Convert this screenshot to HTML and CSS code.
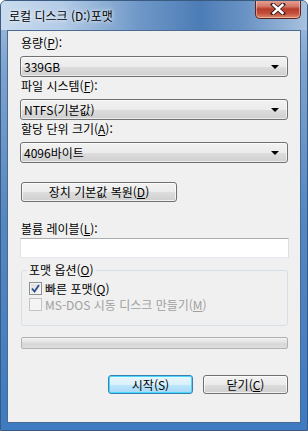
FILE: index.html
```html
<!DOCTYPE html>
<html lang="ko">
  <head>
    <meta charset="UTF-8" />
    <meta name="viewport" content="width=device-width, initial-scale=1.0" />
    <title>로컬 디스크 (D:)포맷</title>
    <link rel="stylesheet" href="styles.css">
  </head>
  <body>
    <div class="window">
      <div class="titlebar">
        <span class="title">로컬 디스크 (D:)포맷</span>
        <button class="close-btn" aria-label="닫기">
          <svg width="16" height="12" viewBox="0 0 16 12">
            <path d="M3 1.5 L13 10.5 M13 1.5 L3 10.5" stroke="#3a2020" stroke-width="4.2" stroke-linecap="square" />
            <path d="M3.5 2 L12.5 10 M12.5 2 L3.5 10" stroke="#ffffff" stroke-width="2.4" stroke-linecap="square" />
          </svg>
        </button>
      </div>
      <div class="client">
        <div class="label">용량(<u>P</u>):</div>
        <div class="combo"><span>339GB</span><span class="arrow"></span></div>

        <div class="label">파일 시스템(<u>F</u>):</div>
        <div class="combo"><span>NTFS(기본값)</span><span class="arrow"></span></div>

        <div class="label">할당 단위 크기(<u>A</u>):</div>
        <div class="combo"><span>4096바이트</span><span class="arrow"></span></div>

        <button class="btn restore">장치 기본값 복원(<u>D</u>)</button>

        <div class="label volume">볼륨 레이블(<u>L</u>):</div>
        <div class="textbox"></div>

        <fieldset class="group">
          <legend>포맷 옵션(<u>O</u>)</legend>
          <label class="check">
            <span class="box checked">
              <svg width="9" height="9" viewBox="0 0 9 9">
                <path d="M1 4.5 L3.5 7.5 L8 1" fill="none" stroke="#2c4c8c" stroke-width="1.8" />
              </svg>
            </span>
            <span>빠른 포맷(<u>Q</u>)</span>
          </label>
          <label class="check disabled">
            <span class="box"></span>
            <span>MS-DOS 시동 디스크 만들기(<u>M</u>)</span>
          </label>
        </fieldset>

        <div class="progress"></div>

        <div class="actions">
          <button class="btn default">시작(S)</button>
          <button class="btn">닫기(<u>C</u>)</button>
        </div>
      </div>
    </div>
  </body>
</html>
```

FILE: styles.css
```css
* {
  box-sizing: border-box;
}
body {
  margin: 0;
  background: #ffffff;
  font-family: "Noto Sans CJK KR", "Noto Sans", sans-serif;
  font-size: 12px;
  color: #000000;
}
.window {
  width: 308px;
  height: 431px;
  border-radius: 6px 6px 0 0;
  border: 1px solid #3a5a80;
  background: linear-gradient(to bottom, #a9c3e0 0%, #7ea4cf 15%, #5587c2 50%, #3e7bc2 100%);
  display: flex;
  flex-direction: column;
  overflow: hidden;
}
.titlebar {
  height: 29px;
  display: flex;
  align-items: flex-start;
  justify-content: space-between;
  background: linear-gradient(to right, #c9dbee 0%, #b3cbe6 20%, #6f98c8 45%, #4c7cb6 65%, #6a93c4 80%, #a8c2df 100%);
}
.title {
  padding: 7px 0 0 8px;
  line-height: 16px;
  font-size: 12px;
  text-shadow: 0 0 6px rgba(255, 255, 255, 0.9), 0 0 3px rgba(255, 255, 255, 0.8);
}
.close-btn {
  width: 46px;
  height: 19px;
  margin: -1px 6px 0 0;
  padding: 0;
  border: 1px solid #5a2622;
  border-top: none;
  border-radius: 0 0 5px 5px;
  background: linear-gradient(to bottom, #e8a394 0%, #d4796a 35%, #b63c2a 50%, #c4503c 75%, #dc8a6a 100%);
  box-shadow: inset 0 0 0 1px rgba(255, 220, 210, 0.5);
  display: flex;
  align-items: center;
  justify-content: center;
}
.client {
  flex: 1;
  margin: 0 6px 7px 6px;
  border: 1px solid #4a6a90;
  background: #f0f0f0;
  padding: 5px 12px 0 12px;
}
.label {
  line-height: 14px;
  margin-left: 1px;
  margin-bottom: 6px;
}
.label u,
.btn u,
legend u,
.check u {
  text-underline-offset: 1px;
}
.combo {
  height: 21px;
  width: 268px;
  border: 1px solid #707070;
  border-radius: 3px;
  background: linear-gradient(to bottom, #f2f2f2 0%, #ebebeb 50%, #dddddd 51%, #cfcfcf 100%);
  box-shadow: inset 0 0 0 1px rgba(255, 255, 255, 0.6);
  display: flex;
  align-items: center;
  justify-content: space-between;
  padding: 0 8px 0 3px;
  margin-bottom: 2px;
  line-height: 14px;
}
.arrow {
  width: 0;
  height: 0;
  border-left: 4px solid transparent;
  border-right: 4px solid transparent;
  border-top: 4px solid #000000;
}
.btn {
  font-family: inherit;
  font-size: 12px;
  line-height: 14px;
  height: 20px;
  padding: 0;
  color: #000000;
  border: 1px solid #707070;
  border-radius: 3px;
  background: linear-gradient(to bottom, #f2f2f2 0%, #ebebeb 50%, #dddddd 51%, #cfcfcf 100%);
  box-shadow: inset 0 0 0 1px rgba(255, 255, 255, 0.7);
}
.restore {
  width: 156px;
  margin: 19px 0 0 1px;
  display: block;
}
.volume {
  margin-top: 20px;
  margin-bottom: 2px;
}
.textbox {
  width: 269px;
  height: 20px;
  background: #ffffff;
  border: 1px solid #abadb3;
  border-right-color: #dbdfe6;
  border-bottom-color: #e3e9ef;
  border-left-color: #e2e3ea;
}
.group {
  width: 267px;
  height: 63px;
  margin: 5px 0 0 1px;
  padding: 4px 0 0 7px;
  border: 1px solid #d5dfe5;
  border-radius: 3px;
}
legend {
  padding: 0 2px;
  margin-left: -2px;
  line-height: 14px;
}
.check {
  display: flex;
  align-items: center;
  gap: 3px;
  line-height: 14px;
  height: 15px;
  margin-bottom: 1px;
}
.check.disabled {
  color: #a0a0a0;
}
.box {
  width: 13px;
  height: 13px;
  border: 1px solid #8e8f8f;
  background: linear-gradient(135deg, #dcdcdc 0%, #f6f6f6 100%);
  box-shadow: inset 0 0 0 1px #f4f4f4;
  display: flex;
  align-items: center;
  justify-content: center;
}
.check.disabled .box {
  border-color: #c4c4c4;
  background: #f4f4f4;
}
.progress {
  width: 267px;
  height: 12px;
  margin: 11px 0 0 1px;
  border: 1px solid #b2b2b2;
  border-radius: 2px;
  background: linear-gradient(to bottom, #f3f3f3 0%, #e4e4e4 40%, #d6d6d6 60%, #dedede 100%);
}
.actions {
  display: flex;
  justify-content: flex-end;
  gap: 10px;
  width: 268px;
  margin-top: 26px;
}
.actions .btn {
  width: 85px;
  height: 19px;
}
.btn.default {
  border-color: #3c7fb1;
  background: linear-gradient(to bottom, #eaf6fd 0%, #d9f0fc 50%, #bee6fd 51%, #a7d9f5 100%);
  box-shadow: inset 0 0 0 1px #48d8fb;
}
```
